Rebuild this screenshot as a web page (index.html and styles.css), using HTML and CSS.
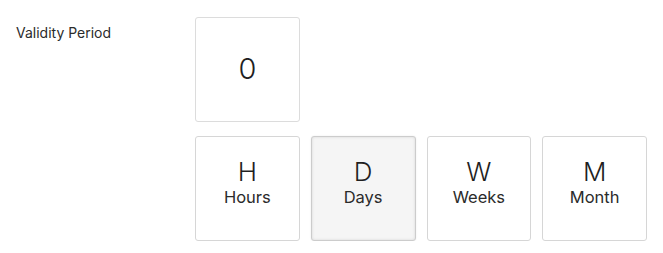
FILE: index.html
```html
<!DOCTYPE html>
<html>
<head>
<meta charset="utf-8">
<link rel="stylesheet" href="styles.css">
</head>
<body>
<div class="field">
  <div class="field-label">Validity Period</div>
  <div class="field-control">
    <div class="value-box">0</div>
    <div class="units">
      <div class="unit"><span class="unit-key">H</span><span class="unit-name">Hours</span></div>
      <div class="unit unit-selected"><span class="unit-key">D</span><span class="unit-name">Days</span></div>
      <div class="unit"><span class="unit-key">W</span><span class="unit-name">Weeks</span></div>
      <div class="unit"><span class="unit-key">M</span><span class="unit-name">Month</span></div>
    </div>
  </div>
</div>
</body>
</html>
```
FILE: styles.css
```css
html, body {
  margin: 0;
  padding: 0;
  background: #ffffff;
}
body {
  font-family: Inter, Lato, "Liberation Sans", sans-serif;
  color: #1f1f1f;
}
.field {
  display: flex;
  padding: 17px 0 0 16px;
}
.field-label {
  width: 179px;
  flex: none;
  font-size: 14px;
  line-height: 20px;
  margin-top: 6px;
  color: #2b2b2b;
}
.field-control {
  display: flex;
  flex-direction: column;
  gap: 14px;
  width: 452px;
}
.value-box {
  width: 105px;
  height: 105px;
  box-sizing: border-box;
  border: 1px solid #dcdcdc;
  border-radius: 3px;
  display: flex;
  align-items: center;
  justify-content: center;
  font-size: 29px;
  font-weight: 300;
  line-height: 1;
  padding-bottom: 3px;
}
.units {
  display: grid;
  grid-template-columns: repeat(4, 1fr);
  gap: 11px;
}
.unit {
  height: 105px;
  box-sizing: border-box;
  border: 1px solid #d6d6d6;
  border-radius: 3px;
  display: flex;
  flex-direction: column;
  align-items: center;
  justify-content: center;
  padding-bottom: 12px;
}
.unit-selected {
  background: #f5f5f5;
  border-color: #cccccc;
  box-shadow: inset 0 0 3px rgba(0, 0, 0, 0.12), 0 0 2px rgba(0, 0, 0, 0.08);
}
.unit-key {
  font-size: 26px;
  font-weight: 300;
  line-height: 28px;
}
.unit-name {
  font-size: 16.5px;
  font-weight: 400;
  line-height: 22px;
  color: #2b2b2b;
}
```
